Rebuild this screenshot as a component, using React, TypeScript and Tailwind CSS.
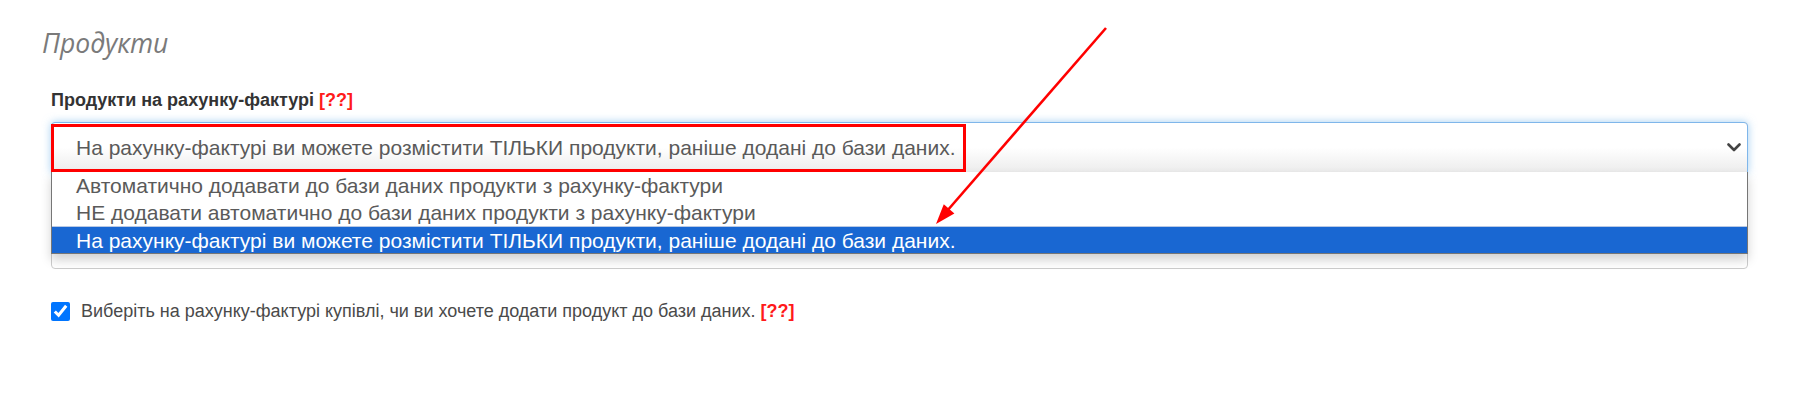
import React from 'react';

const options = [
  'Автоматично додавати до бази даних продукти з рахунку-фактури',
  'НЕ додавати автоматично до бази даних продукти з рахунку-фактури',
  'На рахунку-фактурі ви можете розмістити ТІЛЬКИ продукти, раніше додані до бази даних.',
];

const sans = "font-['Liberation_Sans',Arial,sans-serif]";
const narrow = "font-['Liberation_Sans_Narrow','Arial_Narrow','Liberation_Sans',sans-serif]";

function Chevron() {
  return (
    <svg width="14" height="9" viewBox="0 0 14 9" className="shrink-0">
      <path d="M1.5 1.5 L7 7 L12.5 1.5" fill="none" stroke="#444" strokeWidth="2.6" strokeLinecap="round" strokeLinejoin="round" />
    </svg>
  );
}

function ProductSelect() {
  return (
    <div className="relative mt-[11px] ml-[51px] w-[1697px] h-[147px] rounded-[4px] border border-[#cccccc] bg-white">
      {/* select header, focused */}
      <div className="relative -m-px h-[51px] rounded-t-[4px] border border-[#7fb6ea] bg-gradient-to-b from-white via-white to-[#ececec] shadow-[0_0_8px_rgba(102,175,233,0.6)] flex items-center pl-[24px] pr-[6px]">
        <span className={`${sans} flex-1 text-[21px] leading-none text-[#5a5a5a] whitespace-nowrap`}>{options[2]}</span>
        <Chevron />
      </div>

      {/* text hidden behind the open list */}
      <div className={`${sans} pl-[24px] pt-[59px] text-[21px] leading-[24px] text-[#555555] whitespace-nowrap`}>
        {options[0]}
      </div>

      {/* open option list */}
      <div className="absolute left-[-1px] right-[-1px] top-[49px] border-x border-b border-[#767676] bg-white shadow-[0_6px_10px_rgba(0,0,0,0.18)]">
        {options.map((o, i) => (
          <div
            key={o}
            className={`${sans} h-[27px] flex items-center pl-[24px] text-[21px] leading-none whitespace-nowrap ${
              i === 2 ? 'bg-[#1967d2] text-white border-t border-[#b9c9e4]' : 'text-[#5a5a5a]'
            }`}
          >
            {o}
          </div>
        ))}
      </div>
    </div>
  );
}

export default function App() {
  return (
    <div className="relative w-[1798px] h-[400px] bg-white overflow-hidden">
      <h2 className="ml-[42px] pt-[28px] h-[60px] font-['Open_Sans',sans-serif] font-normal italic text-[26.5px] leading-[31px] text-[#7a7a7a]">
        Продукти
      </h2>

      <label className={`${narrow} block ml-[51px] mt-[29px] font-bold text-[18px] leading-[22px] text-[#333333]`}>
        Продукти на рахунку-фактурі <span className="text-[#ff1a1a]">[??]</span>
      </label>

      <ProductSelect />

      <div className="flex items-center gap-[11px] ml-[51px] mt-[31px] h-[22px]">
        <input type="checkbox" defaultChecked className="w-[19px] h-[19px] accent-[#0075ff]" />
        <span className={`${narrow} text-[18px] leading-[22px] text-[#4a4a4a] whitespace-nowrap`}>
          Виберіть на рахунку-фактурі купівлі, чи ви хочете додати продукт до бази даних.{' '}
          <span className="font-bold text-[#ff1a1a]">[??]</span>
        </span>
      </div>

      {/* annotation: red frame around the selected value */}
      <div className="absolute left-[51px] top-[124px] w-[915px] h-[48px] border-[3px] border-[#ff0000]" />

      {/* annotation: red arrow */}
      <svg className="absolute left-0 top-0 pointer-events-none" width="1798" height="400">
        <line x1="1106" y1="28" x2="947" y2="211" stroke="#ff0000" strokeWidth="2.6" />
        <polygon points="936,224 943.8,204.3 954.4,213.5" fill="#ff0000" />
      </svg>
    </div>
  );
}
